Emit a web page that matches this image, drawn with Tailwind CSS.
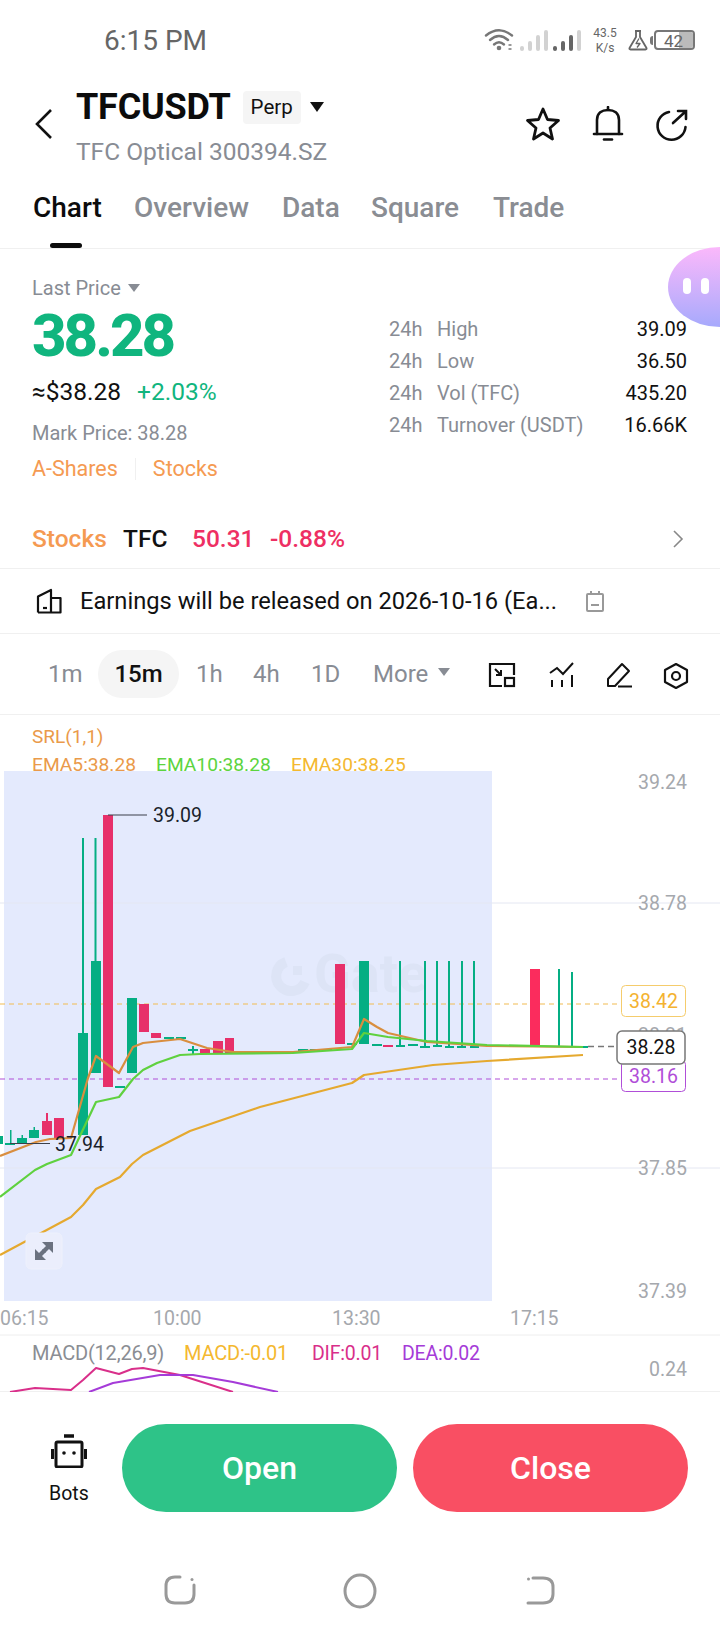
<!DOCTYPE html>
<html lang="en">

<head>
    <meta charset="UTF-8">
    <meta name="viewport" content="width=device-width, initial-scale=1.0">
    <title>TFCUSDT</title>
    <script src="https://cdn.jsdelivr.net/npm/@tailwindcss/browser@4"></script>
</head>

<body class="bg-white font-[Roboto,sans-serif]">
    <div class="relative w-[720px] h-[1640px] overflow-hidden bg-white">
        <!-- status bar -->
        <div class="h-[82px] relative">
            <span class="absolute left-[104px] top-[24px] text-[28px] leading-[34px] text-[#666]">6:15 PM</span>
            <div class="absolute left-[484px] top-[27px] flex items-center h-[26px]">
                <svg width="110" height="26" viewBox="0 0 110 26" fill="none">
                    <g stroke="#777" stroke-width="2.4" stroke-linecap="round">
                        <path d="M2 8.500 Q15 -2 28 8.500" />
                        <path d="M6 13 Q15 5 24 13" />
                        <path d="M10 17.500 Q15 13 20 17.500" />
                    </g>
                    <circle cx="15" cy="21" r="2.300" fill="#777" />
                    <path d="M24.500 18 h3 M24.500 22 h3" stroke="#999" stroke-width="2" />
                    <g fill="#d2d2d2">
                        <rect x="36" y="19" width="4" height="5" rx="2" />
                        <rect x="44" y="14" width="4" height="10" rx="2" />
                        <rect x="52" y="8" width="4" height="16" rx="2" />
                        <rect x="60" y="3" width="4" height="21" rx="2" />
                    </g>
                    <g fill="#666">
                        <rect x="69" y="19" width="4" height="5" rx="2" />
                        <rect x="77" y="14" width="4" height="10" rx="2" />
                        <rect x="85" y="8" width="4" height="16" rx="2" />
                    </g>
                    <rect x="93" y="3" width="4" height="21" rx="2" fill="#d2d2d2" />
                </svg>
            </div>
            <div class="absolute left-[590px] top-[26px] w-[30px] flex flex-col items-center text-[12px] leading-[15px] text-[#666]">
                <span>43.5</span>
                <span>K/s</span>
            </div>
            <svg class="absolute left-[627px] top-[29px]" width="22" height="22" viewBox="0 0 22 22" fill="none" stroke="#666" stroke-width="1.800" stroke-linejoin="round">
                <path d="M8 2 h6 M9 2 v6 L2.500 19 q-.5 1.500 1 1.500 h15 q1.500 0 1 -1.500 L13 8 V2" />
                <path d="M12 9.500 l-3 5 h4 l-3 4" stroke-width="1.300" />
            </svg>
            <div class="absolute left-[650px] top-[36px] w-[3px] h-[9px] bg-[#777] rounded-l-sm"></div>
            <div class="absolute left-[654px] top-[30px] w-[41px] h-[20px] rounded-[4px] border-2 border-[#777] overflow-hidden">
                <div class="absolute right-0 top-0 bottom-0 w-[14px] bg-[#bbb]"></div>
                <span class="absolute left-[8px] top-[-1px] text-[17px] leading-[20px] text-[#666]">42</span>
            </div>
        </div>

        <!-- header -->
        <div class="h-[90px] relative">
            <svg class="absolute left-[33px] top-[26px]" width="22" height="32" viewBox="0 0 22 32" fill="none" stroke="#111" stroke-width="2.600">
                <path d="M18 2 L4 16 L18 30" />
            </svg>
            <div class="absolute left-[76px] top-[3px] flex items-center h-[44px]">
                <span class="text-[36px] leading-[44px] font-bold text-[#0c0c0c] tracking-[-0.2px]">TFCUSDT</span>
                <span class="ml-[12px] w-[58px] h-[33px] rounded bg-[#f5f5f5] flex items-center justify-center text-[20.500px] text-[#111]">Perp</span>
                <span class="ml-[9px] w-0 h-0 border-x-[7px] border-x-transparent border-t-[10px] border-t-[#111]"></span>
            </div>
            <p class="absolute left-[76px] top-[54px] text-[24.500px] leading-[32px] text-[#888c94]">TFC Optical 300394.SZ</p>
            <div class="absolute left-[525px] top-[24px] flex items-center gap-[29px]">
                <svg width="36" height="36" viewBox="0 0 36 36" fill="none" stroke="#111" stroke-width="2.800" stroke-linejoin="round">
                    <path d="M18 3 L22.500 13.500 L33.500 14.500 L25 22 L27.500 33 L18 27 L8.500 33 L11 22 L2.500 14.500 L13.500 13.500 Z" />
                </svg>
                <svg width="36" height="36" viewBox="0 0 36 36" fill="none" stroke="#111" stroke-width="2.600" stroke-linecap="round">
                    <path d="M7 28 V14 C7 7 12 4 18 4 C24 4 29 7 29 14 V28" />
                    <path d="M4 28 H32" />
                    <path d="M14 33.500 H22" />
                    <path d="M18 1 V4" />
                </svg>
                <svg width="36" height="36" viewBox="0 0 36 36" fill="none" stroke="#111" stroke-width="2.600" stroke-linecap="round">
                    <path d="M14 6 A14 14 0 1 0 30.500 21" />
                    <path d="M18 17 L30 6 M23 5 H31 V13" />
                </svg>
            </div>
        </div>

        <!-- tabs -->
        <div class="h-[77px] relative border-b border-[#f0f0f0]">
            <div class="flex pl-[33px] pt-[17px] text-[28px] leading-[38px] font-medium text-[#8a8d93]">
                <span class="text-[#0c0c0c] w-[101px]">Chart</span>
                <span class="w-[148px]">Overview</span>
                <span class="w-[89px]">Data</span>
                <span class="w-[122px]">Square</span>
                <span>Trade</span>
            </div>
            <div class="absolute left-[50px] bottom-0 w-[32px] h-[5px] rounded-full bg-[#0c0c0c]"></div>
        </div>

        <!-- floating pet -->
        <div class="absolute left-[668px] top-[247px] w-[104px] h-[80px] rounded-[50%] bg-gradient-to-b from-[#fbb8fb] to-[#a6a9fc]">
            <div class="absolute left-[15px] top-[31px] w-[8px] h-[16px] rounded-full bg-white"></div>
            <div class="absolute left-[33px] top-[31px] w-[8px] h-[16px] rounded-full bg-white"></div>
        </div>

        <!-- price block -->
        <div class="h-[261px] flex justify-between pl-[32px] pr-[33px]">
            <div class="w-[340px]">
                <div class="mt-[25px] flex items-center text-[20px] leading-[28px] text-[#888c94]">
                    Last Price
                    <span class="ml-[7px] w-0 h-0 border-x-[6px] border-x-transparent border-t-[8px] border-t-[#888c94]"></span>
                </div>
                <div class="mt-[3px] text-[60px] leading-[62px] font-extrabold text-[#10b57e] tracking-[-3px]">38.28</div>
                <div class="mt-[10px] flex text-[24.500px] leading-[30px]">
                    <span class="text-[#111] w-[105px]">≈$38.28</span>
                    <span class="text-[#10b57e]">+2.03%</span>
                </div>
                <div class="mt-[13px] text-[20px] leading-[26px] text-[#888c94]">Mark Price: 38.28</div>
                <div class="mt-[10px] flex items-center text-[21.500px] leading-[26px] text-[#f59a52]">
                    <span>A-Shares</span>
                    <span class="mx-[17px] w-px h-[22px] bg-[#f0f0f0]"></span>
                    <span>Stocks</span>
                </div>
            </div>
            <div class="w-[298px] pt-[67px] flex flex-col gap-[6px] text-[20px] leading-[26px] text-[#888c94]">
                <div class="flex"><span class="w-[48px]">24h</span><span class="flex-1">High</span><span class="text-[#111]">39.09</span></div>
                <div class="flex"><span class="w-[48px]">24h</span><span class="flex-1">Low</span><span class="text-[#111]">36.50</span></div>
                <div class="flex"><span class="w-[48px]">24h</span><span class="flex-1">Vol (TFC)</span><span class="text-[#111]">435.20</span></div>
                <div class="flex"><span class="w-[48px]">24h</span><span class="flex-1">Turnover (USDT)</span><span class="text-[#111]">16.66K</span></div>
            </div>
        </div>

        <!-- stock link row -->
        <div class="h-[59px] flex items-center pl-[32px] pr-[36px] border-b border-[#f0f0f0] text-[24.500px]">
            <span class="font-medium text-[#f59a52] w-[91px]">Stocks</span>
            <span class="text-[#111] font-medium w-[69px]">TFC</span>
            <span class="text-[#ee2f63] font-medium w-[78px]">50.31</span>
            <span class="text-[#ee2f63] font-medium">-0.88%</span>
            <svg class="ml-auto" width="12" height="20" viewBox="0 0 12 20" fill="none" stroke="#888" stroke-width="1.600">
                <path d="M2 2 L10 10 L2 18" />
            </svg>
        </div>

        <!-- earnings row -->
        <div class="h-[65px] flex items-center pl-[36px] border-b border-[#f0f0f0]">
            <svg width="26" height="26" viewBox="0 0 26 26" fill="none" stroke="#111" stroke-width="2.200" stroke-linejoin="round">
                <path d="M2 24.500 V8.500 L15 2 V24.500 M15 10 H24.500 V24.500 H2" />
                <path d="M7 20 H11" />
            </svg>
            <span class="ml-[18px] w-[498px] text-[23.700px] leading-[32px] text-[#111] truncate">Earnings will be released on 2026-10-16 (Ea...</span>
            <svg class="ml-[7px]" width="20" height="22" viewBox="0 0 20 22" fill="none" stroke="#999" stroke-width="2">
                <rect x="2" y="4" width="16" height="17" rx="1" />
                <path d="M6 1 V5 M14 1 V5 M6 15 H14" />
            </svg>
        </div>

        <!-- timeframe row -->
        <div class="h-[81px] flex items-center border-b border-[#f0f0f0] text-[24px] text-[#888c94] relative">
            <span class="ml-[48px] w-[50px]">1m</span>
            <span class="w-[81px] h-[48px] rounded-full bg-[#f5f5f5] flex items-center justify-center font-medium text-[#111]">15m</span>
            <span class="ml-[17px] w-[57px]">1h</span>
            <span class="w-[58px]">4h</span>
            <span class="w-[62px]">1D</span>
            <span>More</span>
            <span class="ml-[10px] mb-[4px] w-0 h-0 border-x-[6px] border-x-transparent border-t-[8px] border-t-[#888c94]"></span>
            <div class="absolute left-[488px] top-[28px] flex gap-[31px]">
                <svg class="mr-[2px]" width="28" height="26" viewBox="0 0 28 26" fill="none" stroke="#111" stroke-width="2.200">
                    <path d="M14 24 H2 V2 H26 V13" />
                    <rect x="17" y="16" width="9" height="8" />
                    <path d="M7 7 L13 13 M8 13 H13 V8" stroke-width="2" />
                </svg>
                <svg width="26" height="26" viewBox="0 0 26 26" fill="none" stroke="#111" stroke-width="2">
                    <path d="M1 11 L8 6 L14 12 L24 1" />
                    <path d="M3 18 V25 M13 18 V25 M23 13 V25" />
                </svg>
                <svg width="26" height="26" viewBox="0 0 26 26" fill="none" stroke="#111" stroke-width="2" stroke-linejoin="round">
                    <path d="M2 24 V17 L16 2 L23 9 L9 24 Z" />
                    <path d="M12 24.500 H26" />
                </svg>
                <svg width="26" height="28" viewBox="0 0 26 28" fill="none" stroke="#111" stroke-width="2.200" stroke-linejoin="round">
                    <path d="M13 2 L24 8 V20 L13 26 L2 20 V8 Z" />
                    <circle cx="13" cy="14" r="4" />
                </svg>
            </div>
        </div>

        <!-- chart canvas, coordinates are page coordinates -->
        <div class="h-[677px] relative border-b border-[#f0f0f0]">
            <svg class="absolute inset-0" width="720" height="677" viewBox="0 715 720 677" fill="none" stroke-linejoin="round">
                <rect x="4" y="771" width="488" height="530" fill="#e4eafd" />
                <g stroke="#e4e7f2" stroke-width="1">
                    <path d="M0 903 H720 M0 1168 H720" />
                    <path d="M0 1335 H720" stroke="#eeeeee" />
                </g>
                <!-- watermark -->
                <path d="M286 962 A15 15 0 1 0 305 982" stroke="#dde4f6" stroke-width="10" />
                <rect x="293" y="966" width="9" height="9" fill="#dde4f6" />
                <text x="314" y="992" font-size="54" font-weight="700" fill="#dde4f6">Gate</text>

                <text x="32" y="743" font-size="19" fill="#ea9a4a">SRL(1,1)</text>
                <text x="32" y="771" font-size="19.200" fill="#ea9a4a">EMA5:38.28</text>
                <text x="156" y="771" font-size="19.200" fill="#5cd43f">EMA10:38.28</text>
                <text x="291" y="771" font-size="19.200" fill="#f4b82f">EMA30:38.25</text>

                <g font-size="19.500" fill="#a5a8ad" text-anchor="end">
                    <text x="687" y="789">39.24</text>
                    <text x="687" y="910">38.78</text>
                    <text x="687" y="1042">38.31</text>
                    <text x="687" y="1175">37.85</text>
                    <text x="687" y="1298">37.39</text>
                    <text x="687" y="1376">0.24</text>
                </g>
                <g font-size="19.500" fill="#a5a8ad">
                    <text x="0" y="1325">06:15</text>
                    <text x="153" y="1325">10:00</text>
                    <text x="332" y="1325">13:30</text>
                    <text x="510" y="1325">17:15</text>
                </g>

                <!-- reference price lines -->
                <path d="M0 1004 H621" stroke="#f2bb52" stroke-width="1.200" stroke-dasharray="5 4" />
                <path d="M0 1079 H621" stroke="#b04ed8" stroke-width="1.200" stroke-dasharray="5 4" />
                <path d="M588 1046.500 H618" stroke="#777" stroke-width="1.500" stroke-dasharray="6 4" />

                <!-- green candles -->
                <g fill="#05ae83">
                    <rect x="0" y="1136" width="3" height="8" />
                    <rect x="17" y="1138" width="10" height="6" />
                    <rect x="29" y="1130" width="10" height="8" />
                    <rect x="78" y="1033" width="10" height="102" />
                    <rect x="82" y="838" width="2" height="195" />
                    <rect x="91" y="961" width="10" height="112" />
                    <rect x="94.500" y="838" width="2" height="123" />
                    <rect x="127" y="998" width="10" height="75" />
                    <rect x="115" y="1086" width="10" height="2" />
                    <rect x="164" y="1037" width="10" height="2" />
                    <rect x="176" y="1037" width="10" height="2" />
                    <rect x="188" y="1049" width="10" height="2" />
                    <rect x="192" y="1046" width="2" height="8" />
                    <rect x="298" y="1049" width="10" height="2" />
                    <rect x="310" y="1049" width="10" height="2" />
                    <rect x="322" y="1049" width="10" height="2" />
                    <rect x="347" y="1043" width="10" height="2" />
                    <rect x="359" y="961" width="10" height="83" />
                    <rect x="372" y="1044" width="10" height="2" />
                    <rect x="396" y="1045" width="9" height="2" />
                    <rect x="399" y="961" width="2" height="84" />
                    <rect x="408" y="1044" width="10" height="2" />
                    <rect x="420" y="1046" width="10" height="2" />
                    <rect x="424" y="961" width="2" height="85" />
                    <rect x="433" y="1045" width="9" height="2" />
                    <rect x="436" y="961" width="2" height="84" />
                    <rect x="445" y="1046" width="9" height="2" />
                    <rect x="448" y="961" width="2" height="85" />
                    <rect x="457" y="1046" width="9" height="2" />
                    <rect x="461" y="961" width="2" height="85" />
                    <rect x="470" y="1046" width="9" height="2" />
                    <rect x="473" y="961" width="2" height="85" />
                    <rect x="558" y="969" width="2" height="77" />
                    <rect x="571" y="972" width="2" height="74" />
                    <rect x="580" y="1046" width="8" height="2" />
                    <rect x="5" y="1143" width="10" height="2" />
                    <rect x="10" y="1130" width="1.500" height="13" />
                    <rect x="33.500" y="1127" width="1.500" height="3" />
                    <rect x="21.500" y="1135" width="1.500" height="3" />
                </g>
                <!-- red candles -->
                <g fill="#e7306a">
                    <rect x="46" y="1113" width="2" height="9" />
                    <rect x="42" y="1121" width="10" height="14" />
                    <rect x="54" y="1118" width="10" height="20" />
                    <rect x="103" y="815" width="10" height="272" />
                    <rect x="139" y="1004" width="10" height="28" />
                    <rect x="151" y="1033" width="10" height="5" />
                    <rect x="200" y="1049" width="10" height="5" />
                    <rect x="213" y="1041" width="10" height="13" />
                    <rect x="225" y="1038" width="9" height="16" />
                    <rect x="335" y="964" width="10" height="80" />
                    <rect x="383" y="1045" width="10" height="2" />
                </g>
                <rect x="530" y="969" width="10" height="76" fill="#fb2c5d" />

                <!-- EMA lines -->
                <polyline stroke="#e5a92f" stroke-width="2.200" points="0,1255 71,1217 83,1205 96,1189 120,1177 132,1164 143,1155 190,1131 260,1107 352,1083 364,1075 433,1065 487,1061 583,1055" />
                <polyline stroke="#d98e3f" stroke-width="2.200" points="0,1156 36,1142 50,1139 71,1138 88,1078 96,1056 119,1073 133,1047 143,1043 180,1039 207,1048 233,1052 293,1052 352,1047 364,1019 377,1027 388,1033 427,1042 487,1046 583,1047" />
                <polyline stroke="#5fd13f" stroke-width="2.200" points="0,1197 35,1170 47,1164 71,1155 96,1102 119,1097 133,1079 143,1070 157,1063 180,1055 200,1054 293,1053 352,1049 364,1033 388,1037 427,1041 487,1045 583,1047" />

                <!-- high / low markers -->
                <path d="M108 815 H147" stroke="#3a3f4a" stroke-width="1.200" />
                <text x="153" y="822" font-size="19.500" fill="#1a1f2b">39.09</text>
                <path d="M10 1143.500 H50" stroke="#3a3f4a" stroke-width="1.200" />
                <text x="55" y="1151" font-size="19.500" fill="#1a1f2b">37.94</text>

                <!-- price tags -->
                <rect x="621.500" y="985.500" width="64" height="31" rx="4" fill="#fff" stroke="#f5cc6c" />
                <text x="653.500" y="1008" font-size="19.500" fill="#f4b22f" text-anchor="middle">38.42</text>
                <rect x="621.500" y="1060.500" width="64" height="31" rx="4" fill="#fff" stroke="#b04ed8" />
                <text x="653.500" y="1083" font-size="19.500" fill="#b04ed8" text-anchor="middle">38.16</text>
                <rect x="617" y="1031" width="68" height="33" rx="5" fill="#fff" stroke="#777" stroke-width="1.500" />
                <text x="651" y="1054" font-size="19.500" fill="#111" text-anchor="middle">38.28</text>

                <!-- expand button -->
                <rect x="26" y="1233" width="36" height="36" rx="5" fill="#ebeefc" stroke="#eef1fc" />
                <g fill="#6b7280">
                    <path d="M35 1260 V1249 L39 1253 L43 1249 L46 1252 L42 1256 L46 1260 Z" />
                    <path d="M53 1242 V1253 L49 1249 L45 1253 L42 1250 L46 1246 L42 1242 Z" />
                </g>

                <!-- MACD -->
                <text x="32" y="1360" font-size="20" fill="#8a8d93" letter-spacing="-.2">MACD(12,26,9)</text>
                <text x="184" y="1360" font-size="20" fill="#f4b82f" letter-spacing="-.2">MACD:-0.01</text>
                <text x="312" y="1360" font-size="19.500" fill="#d92f8a" letter-spacing="-.2">DIF:0.01</text>
                <text x="402" y="1360" font-size="19.500" fill="#a53bd8" letter-spacing="-.2">DEA:0.02</text>
                <polyline stroke="#d92f8a" stroke-width="2" points="10,1392 35,1388 71,1390 83,1380 96,1368 119,1374 132,1369 143,1368 180,1375 233,1392" />
                <polyline stroke="#a53bd8" stroke-width="2" points="89,1392 113,1383 160,1375 193,1375 233,1382 278,1392" />
            </svg>
        </div>

        <!-- bottom action bar -->
        <div class="h-[136px] flex pl-[32px] pr-[32px] pt-[32px]">
            <div class="w-[90px] flex flex-col items-start">
                <svg class="ml-[19px] mt-[10px]" width="36" height="34" viewBox="0 0 36 34" fill="none" stroke="#111" stroke-width="3">
                    <path d="M13 2 H23" stroke-width="3.500" />
                    <rect x="5" y="8" width="26" height="25" rx="1.500" />
                    <path d="M1.500 15 V25 M34.500 15 V25" stroke-width="3" />
                    <circle cx="13" cy="19" r="1.800" fill="#111" stroke="none" />
                    <circle cx="23" cy="19" r="1.800" fill="#111" stroke="none" />
                </svg>
                <span class="ml-[17px] mt-[13px] text-[19.500px] leading-[26px] text-[#111]">Bots</span>
            </div>
            <div class="w-[275px] h-[88px] rounded-[44px] bg-[#2ec388] flex items-center justify-center text-[32px] font-medium text-white">Open</div>
            <div class="ml-[16px] w-[275px] h-[88px] rounded-[44px] bg-[#f94f63] flex items-center justify-center text-[32px] font-medium text-white">Close</div>
        </div>

        <!-- system nav -->
        <div class="h-[112px] relative">
            <svg class="absolute left-[164px] top-[47px]" width="32" height="32" viewBox="0 0 32 32" fill="none" stroke="#999" stroke-width="3" stroke-linecap="round">
                <path d="M16 2 H11 Q2 2 2 11 V19 Q2 28 11 28 H21 Q30 28 30 19 V10" />
                <circle cx="28" cy="4.500" r="1.500" fill="#999" stroke="none" />
            </svg>
            <svg class="absolute left-[343px] top-[45px]" width="34" height="36" viewBox="0 0 34 36" fill="none" stroke="#999" stroke-width="3">
                <ellipse cx="17" cy="18" rx="15" ry="16" />
            </svg>
            <svg class="absolute left-[524px] top-[47px]" width="32" height="32" viewBox="0 0 32 32" fill="none" stroke="#999" stroke-width="3" stroke-linecap="round">
                <path d="M9 3 H19 Q29 3 29 12 V19 Q29 28 19 28 H4" />
                <circle cx="4.500" cy="4" r="1.500" fill="#999" stroke="none" />
            </svg>
        </div>
    </div>
</body>

</html>
